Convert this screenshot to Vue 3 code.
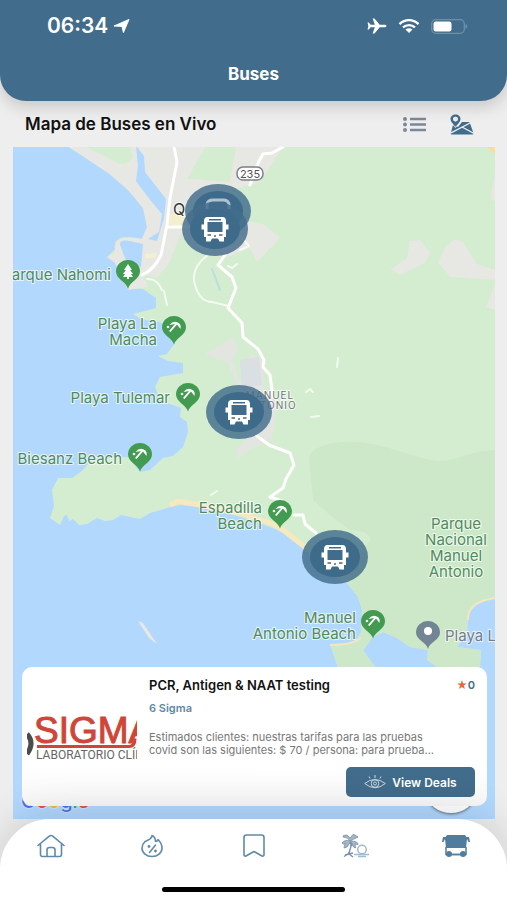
<script setup>
const buses = [
  { id: 1, x: 218, y: 211, faded: true },
  { id: 2, x: 215, y: 229 },
  { id: 3, x: 239, y: 412 },
  { id: 4, x: 335, y: 557 },
]

const beaches = [
  { x: 174, y: 345 },
  { x: 188, y: 412 },
  { x: 140, y: 472 },
  { x: 280, y: 529 },
  { x: 373, y: 639 },
]

const labels = [
  { x: 111, y: 280, text: 'Parque Nahomi', anchor: 'end' },
  { x: 157, y: 329, text: 'Playa La', anchor: 'end' },
  { x: 157, y: 345, text: 'Macha', anchor: 'end' },
  { x: 170, y: 403, text: 'Playa Tulemar', anchor: 'end' },
  { x: 122, y: 464, text: 'Biesanz Beach', anchor: 'end' },
  { x: 262, y: 513, text: 'Espadilla', anchor: 'end' },
  { x: 262, y: 529, text: 'Beach', anchor: 'end' },
  { x: 356, y: 623, text: 'Manuel', anchor: 'end' },
  { x: 356, y: 639, text: 'Antonio Beach', anchor: 'end' },
  { x: 456, y: 529, text: 'Parque', anchor: 'middle' },
  { x: 456, y: 545, text: 'Nacional', anchor: 'middle' },
  { x: 456, y: 561, text: 'Manuel', anchor: 'middle' },
  { x: 456, y: 577, text: 'Antonio', anchor: 'middle' },
]
</script>

<template>
  <div class="screen">
    <header class="header">
      <div class="status">
        <div class="status-group">
          <span class="time">06:34</span>
          <svg class="locate" viewBox="0 0 17 14" aria-hidden="true"><path d="M16 0 10 14 8.500 7.500 0 7z" fill="#fff" stroke="#fff" stroke-linejoin="round" /></svg>
        </div>
        <div class="status-group signals">
          <svg class="plane" viewBox="0 0 20 16" aria-hidden="true"><path d="M19.500 8c0-.9-1-1.300-2.200-1.300h-4.600L7.500.500H5.600l2.300 6.200H3.600L1.800 4.500H.500L1.400 8 .5 11.500h1.300l1.800-2.200h4.300l-2.300 6.200h1.900l5.200-6.200h4.600c1.200 0 2.200-.4 2.200-1.300z" fill="#fff" /></svg>
          <svg class="wifi" viewBox="0 0 22 14" aria-hidden="true">
            <path d="M1.500 5.200C7-.2 15-.2 20.500 5.200M5 8.400c3.500-3.100 8.500-3.100 12 0" fill="none" stroke="#fff" stroke-width="2.400" />
            <path d="M7.500 10.600c2-1.700 5-1.700 7 0L11 14z" fill="#fff" />
          </svg>
          <svg class="battery" viewBox="0 0 37 15" aria-hidden="true">
            <rect x=".7" y=".7" width="32.600" height="13.600" rx="4" fill="none" stroke="#6d8fa9" stroke-width="1.300" />
            <rect x="2.500" y="2.500" width="18" height="10" rx="2.200" fill="#fff" />
            <path d="M34.500 5v5q2-.8 2-2.500t-2-2.500" fill="#6d8fa9" />
          </svg>
        </div>
      </div>
      <h1 class="title">Buses</h1>
    </header>

    <main class="main">
      <div class="toolbar">
        <h2 class="heading">Mapa de Buses en Vivo</h2>
        <div class="views">
          <button type="button" class="view-button" aria-label="Lista">
            <svg class="list-icon" viewBox="0 0 23 15">
              <g fill="#7e8797"><circle cx="2" cy="2" r="2" /><circle cx="2" cy="7.500" r="2" /><circle cx="2" cy="13" r="2" /><path d="M7 .8h16v2.400H7zM7 6.300h16v2.400H7zM7 11.800h16v2.400H7z" /></g>
            </svg>
          </button>
          <button type="button" class="view-button" aria-label="Mapa">
            <svg class="map-icon" viewBox="0 0 24 21">
              <path d="M3 11 .8 19.300q-.2 1.200 1 1.200h20.700q1.300 0 1-1.200L20 9.200Q19.700 8 18.500 8H12l-4 5z" fill="#426c8b" />
              <path d="M1 18.800 21 8.500M12 13l12 6.500" stroke="#eee" stroke-width="1.300" />
              <path d="M5.500.5C2.700.5.500 2.400.5 5c0 2.600 2.500 5 5 7.800 2.500-2.800 5-5.200 5-7.800 0-2.600-2.200-4.500-5-4.500zm0 7a2.400 2.400 0 1 1 0-4.800 2.400 2.400 0 0 1 0 4.800z" fill="#426c8b" fill-rule="evenodd" stroke="#eee" stroke-width="1.600" paint-order="stroke" />
              <circle cx="5.500" cy="5.100" r="2.300" fill="#eee" />
            </svg>
          </button>
        </div>
      </div>

      <section class="map" aria-label="Mapa">
        <svg class="map-canvas" viewBox="13 147 482 672" preserveAspectRatio="xMidYMid slice">
          <defs>
            <symbol id="beach-pin" viewBox="0 0 24 29" overflow="visible">
              <path d="M12 28.500C10.500 22 0 19 0 11.500a12 11.500 0 0 1 24 0C24 19 13.500 22 12 28.500z" fill="#429b50" />
              <path d="M7.500 9Q12 3.500 17.500 7.500 19.500 10 18.500 13L15 8.500 8.500 16 7 15l6-7z" fill="#fff" />
              <circle cx="6" cy="11" r="1.300" fill="#fff" />
            </symbol>
            <symbol id="bus-glyph" viewBox="0 0 28 25">
              <path d="M6.500 0h15C24 0 25 2 25 4v3.500h2.500v5H25V20h-2v4.500h-4.500L17 21.500h-6l-1.500 3H5V20H3v-7.500H.5v-5H3V4c0-2 1-4 3.500-4z" fill="#fff" />
              <path d="M8 2h12v1.500H8zM6.500 5h15v10h-15z" fill="#426c8b" />
              <path d="M6.500 18h3.500M18 18h3.500M13 19h2" stroke="#426c8b" stroke-width="1.500" />
            </symbol>
          </defs>

          <path d="M13 147h482v672H13z" fill="#b2d8fe" />
          <path d="M67 146 87 157 110 173 128 190 143 208 147 227 142 239 123 237Q113 240 115 249L107 257 120 262 118 276 128 288 143 289 156 298V308L145 311 133 314 141 319 160 322 176 332 175 343 167 354 158 356 168 361 183 363V373L160 377 155 387 160 400 170 404 181 408 180 417 187 422 188 432 183 447 173 456 163 458 150 470 140 472 128 457 110 458 90 462 82 471 72 478 58 478 52 490 54 506 50 518 60 525 64 516 67 515 69 521 73 519 79 525 87 524 97 518 105 521 113 520 121 515 140 519 150 513 167 508 180 505 200 507 233 515 260 523 277 530 300 543 320 570 347 583 358 597 362 610 361 632 355 643 330 644 338 667H375L363 650 373 637 383 632 397 638 410 647 428 650 427 660 437 667H480L481 650 457 647 467 633 468 613 477 603 495 598V147z" fill="#d4edd0" />
          <path d="M309 458Q310 446 340 442C380 440 405 455 430 460S462 451 495 450V598L477 603 468 613 467 633 457 647 481 650 480 667H437L427 660 428 650 410 647 397 638 383 632 373 637 363 650 375 667H338L330 644 355 643 361 632 362 610 358 597 347 583 360 555 370 540Q370 530 350 530L330 515 313 500z" fill="#cde8c8" />
          <path d="M67 146H258L283 147 260 182 232 190 225 215 265 225 280 238 257 262 250 248 225 258 205 252 180 235 170 262 157 278 142 274 148 287 128 290 115 263 107 257 115 253V244Q122 234 142 239L147 227 143 208 128 190 108 173z" fill="#e7e7e3" />
          <path d="M86 147H130L133 157Q128 165 120 164Q101 154 86 147z" fill="#d4edd0" />
          <path d="M205 147 236 147 230 182 205 180 187 179zM170 262 182 239 200 248 188 275 157 278zM232 190 245 186 258 210 252 222z" fill="#d4edd0" />
          <path d="M136 146 144 156 145 172 166 199 164 218 157 241 148 239 159 232 162 214 151 201 136 181 138 166zM120 245Q119 239 130 241L143 244 141 267 127 263z" fill="#b2d8fe" />
          <path d="M145 254 157 253 156 258 145 258zM168 215 195 208 185 226 170 226z" fill="#f4efcf" />
          <path d="M205 354 232 338 238 347 232 360 240 383 250 353 262 360 264 388 278 400 272 440 245 452 237 460 236 450 248 437 247 410 235 382 228 363z" fill="#e3e5e1" />
          <path d="M240 360 259 357 262 385 242 389z" fill="#dadfe4" />
          <path d="M391 269 407 258 410 241 420 240 430 253 425 263 400 275zM438 262 447 245 455 239 463 242 477 264 495 270V280L450 277zM495 285 486 307 495 310zM495 174 490 199 495 201z" fill="#e7e7e3" />
          <path d="M487 147h8v7z" fill="#f9df92" />
          <path d="M138 621 143 623 157 644 149 638z" fill="#e7e7e3" />
          <path d="M170 505 178 501 195 504 240 513 278 526 306 548" fill="none" stroke="#f8e8bd" stroke-width="5" />
          <path d="M468 620Q467 602 495 598M330 645Q350 646 361 638" fill="none" stroke="#f5e6bd" stroke-width="2" />
          <g fill="none" stroke="#fff" stroke-linejoin="round" stroke-linecap="round">
            <path d="M174 147 177 162 170 198 167 225 161 255Q154 270 142 275M168 227H190M250 185 258 163 263 154 272 153 283 147M225 255 218 265 232 277 236 288 228 308 242 323 243 337 258 349 264 360 263 367 270 375 273 397M257 436 269 445 290 453 294 465 286 479 283 488 270 497 282 501M294 515 303 515 305 524 316 533" stroke-width="3" />
            <path d="M208 255Q190 268 195 285T212 302L229 306M162 290Q157 278 147 279M164 291 167 305M240 236 249 246 240 250M338 358 337 367M306 392l4-3 3 3M311 417l8-1M228 266l4 2 5-4M211 495l6-4" stroke-width="2" opacity=".7" />
            <path d="M212 269 220 290" stroke="#bedce7" stroke-width="2" />
          </g>

          <text class="place city" x="173" y="215">Q</text>
          <text class="place district" x="270" y="399" text-anchor="middle">MANUEL</text>
          <text class="place district" x="270" y="409" text-anchor="middle">ANTONIO</text>
          <rect x="237" y="167" width="26" height="13" rx="6" fill="#fff" stroke="#7c8186" stroke-width="1.500" />
          <text class="place route" x="250" y="178" text-anchor="middle">235</text>
          <text v-for="label in labels" :key="label.text + label.y" class="place" :x="label.x" :y="label.y" :text-anchor="label.anchor">{{ label.text }}</text>
          <text class="place muted" x="445" y="641">Playa La Vaca</text>

          <path d="M128 289C126.500 282 116 279 116 271.500a12 11.500 0 0 1 24 0C140 279 129.500 282 128 289z" fill="#429b50" />
          <path d="m128 264-4 6h2l-3 4h2l-2 3h4v2h2v-2h4l-2-3h2l-3-4h2z" fill="#fff" />
          <use v-for="pin in beaches" :key="pin.y" href="#beach-pin" :x="pin.x - 12" :y="pin.y - 29" width="24" height="29" />
          <path d="M428 649C426.500 642 416 640 416 632.500a12 11.500 0 0 1 24 0C440 640 429.500 642 428 649z" fill="#738594" />
          <circle cx="428" cy="631" r="4" fill="#fff" />

          <a v-for="bus in buses" :key="bus.id" :href="'#bus-' + bus.id" :aria-label="'Bus ' + bus.id">
            <ellipse :cx="bus.x" :cy="bus.y" rx="33" ry="27" fill="#426c8b" fill-opacity=".82" />
            <ellipse :cx="bus.x" :cy="bus.y" rx="25" ry="20" fill="#3f6b8b" />
            <path v-if="bus.faded" d="M207 209v-5q1-4 6-4h10q5 0 6 4v5" fill="none" stroke="#b1c3d1" stroke-width="3" />
            <use v-else href="#bus-glyph" :x="bus.x - 14" :y="bus.y - 12" width="28" height="25" />
          </a>
        </svg>

        <div class="attribution">
          <span class="google" aria-label="Google"><span class="blue">G</span><span class="red">o</span><span class="yellow">o</span><span class="blue">g</span><span class="green">l</span><span class="red">e</span></span>
          <span class="round-control"></span>
        </div>

        <article class="card">
          <svg class="logo" viewBox="0 0 110 50" role="img" aria-label="Sigma Laboratorio Clínico">
            <path d="M0 22q8 9 0 20" fill="none" stroke="#4b4b4b" stroke-width="5" />
            <text class="logo-name" x="7" y="31">SIGMA</text>
            <path d="M10 34.500h92q6 0 6-8" fill="none" stroke="#cf4638" stroke-width="3" />
            <text class="logo-sub" x="9" y="47">LABORATORIO CLÍNICO</text>
          </svg>
          <div class="info">
            <div class="info-top">
              <h3 class="deal-title">PCR, Antigen &amp; NAAT testing</h3>
              <span class="rating"><span class="star">★</span>0</span>
            </div>
            <p class="vendor">6 Sigma</p>
            <p class="description">Estimados clientes: nuestras tarifas para las pruebas<br>covid son las siguientes: $ 70 / persona: para prueba...</p>
            <button type="button" class="deals">
              <svg class="eye" viewBox="0 0 22 14" aria-hidden="true">
                <g fill="none" stroke="#c9d8e3"><path d="M.7 8.500Q11 .5 21.300 8.500 11 17 .7 8.500z" /><circle cx="11" cy="8.500" r="3.800" /><circle cx="11" cy="8.500" r="1.500" /><path d="M11 0v3M5 1.500l1 2M17 1.500l-1 2" /></g>
              </svg>
              View Deals
            </button>
          </div>
        </article>
      </section>
    </main>

    <nav class="nav" aria-label="Principal">
      <div class="tabs">
        <a href="#inicio" class="tab" aria-label="Inicio">
          <svg viewBox="0 0 28 24"><g fill="none" stroke="#5f8aaa" stroke-width="1.600" stroke-linecap="round" stroke-linejoin="round"><path d="M1 11.500 12 2.300q2-1.500 4 0L27 11.500M3.500 10v10.500q0 2 2 2h17q2 0 2-2V10M10 22v-6q0-2.500 2.500-2.500h3Q18 13.500 18 16v6" /></g></svg>
        </a>
        <a href="#ofertas" class="tab" aria-label="Ofertas">
          <svg viewBox="0 0 28 24"><g fill="none" stroke="#5f8aaa" stroke-width="1.600" stroke-linecap="round" stroke-linejoin="round"><path d="M14 1.500C14 5.500 8 7 7 7.500 5 9.500 4 11.500 4 14c0 5 4.500 8.500 10 8.500S24 19 24 14c0-3.500-1.500-6-4-8.500-.5 1.500-1.500 2-2.500 2 0-3-1-5-3.500-6zM17.500 11l-6 7.500" /></g><circle cx="11" cy="12.500" r="1.400" fill="#5f8aaa" /><circle cx="17.500" cy="17" r="1.400" fill="#5f8aaa" /></svg>
        </a>
        <a href="#guardados" class="tab" aria-label="Guardados">
          <svg viewBox="0 0 28 24"><path d="M4 20.500V3.500Q4 1 6.500 1h15Q24 1 24 3.500v17q0 2-2 1.500L14 17.500 6 22q-2 .5-2-1.500z" fill="none" stroke="#5f8aaa" stroke-width="1.600" stroke-linejoin="round" /></svg>
        </a>
        <a href="#playas" class="tab" aria-label="Playas">
          <svg viewBox="0 0 28 24">
            <path d="M9.500 7C7 6 3 6 1 9q1.500 1.500 3 .5L3 14l3-1 3.500-5 3 5 2 1-.5-4 3 .5Q17 7 9.500 7zM9 7Q7 3 2 3l.5-1.500L6 1l3 3 3-3.500L14 1l3 2-2 1q-3 1-5.500 3z" fill="#a4b5c3" stroke="#7891a6" stroke-width=".8" />
            <path d="M9.500 8Q11 14 7 20l-4 2.500M11 9q-2 6-3 11l4 3M4 21l8-2" fill="none" stroke="#7992a7" stroke-width="1.300" />
            <circle cx="21" cy="15.500" r="4.300" fill="none" stroke="#9ebbd0" stroke-width="1.500" />
            <path d="M13 20.500h15M17 22.500h8" stroke="#9ebbd0" stroke-width="1.500" />
          </svg>
        </a>
        <a href="#buses" class="tab" aria-label="Buses" aria-current="page">
          <svg viewBox="0 0 28 24"><path d="M5 1h18l1.500 2H27l1 5h-1.500L25 5l-1 9H4L3 5 1.500 8H0l1-5h2.500z" fill="#527c9d" /><path d="M4 13v7.500h20V13" fill="none" stroke="#527c9d" stroke-width="1.500" /><path d="M9 20.500h10" stroke="#527c9d" stroke-width="1.500" /><circle cx="7" cy="20" r="3" fill="#527c9d" /><circle cx="21" cy="20" r="3" fill="#527c9d" /></svg>
        </a>
      </div>
      <div class="home-indicator"></div>
    </nav>
  </div>
</template>

<style>
body {
  margin: 0;
}
</style>

<style scoped>
.screen {
  display: flex;
  flex-direction: column;
  min-height: 100vh;
  background: #eee;
  color: #111;
  font-family: Inter, "Liberation Sans", sans-serif;
}

h1, h2, h3, p {
  margin: 0;
}

svg {
  display: block;
}

button {
  padding: 0;
  border: 0;
  background: none;
  font: inherit;
  cursor: pointer;
}

.header {
  position: relative;
  z-index: 1;
  box-sizing: border-box;
  height: 101px;
  padding: 14px 39px 0 47px;
  border-radius: 0 0 26px 26px;
  background: #426c8b;
  box-shadow: 0 6px 16px rgb(0 0 0 / 16%);
  color: #fff;
}

.status,
.status-group {
  display: flex;
  align-items: center;
}

.status {
  justify-content: space-between;
  height: 24px;
}

.status-group {
  gap: 6px;
}

.signals {
  gap: 11px;
}

.time {
  font-size: 21px;
  font-weight: 600;
  line-height: 24px;
}

.locate { width: 16px; height: 14px; }
.plane { width: 20px; height: 16px; }
.wifi { width: 22px; height: 14px; }
.battery { width: 37px; height: 15px; }

.title {
  margin: 26px 8px 0 0;
  font-size: 17px;
  font-weight: 700;
  line-height: 20px;
  text-align: center;
}

.main {
  display: flex;
  flex: 1;
  flex-direction: column;
  padding: 0 12px 0 13px;
}

.toolbar {
  display: flex;
  align-items: center;
  justify-content: space-between;
  height: 46px;
  padding: 0 21px 0 12px;
}

.heading {
  font-size: 17px;
  font-weight: 600;
  line-height: 20px;
}

.views {
  display: flex;
  align-items: center;
  gap: 24px;
}

.list-icon { width: 23px; height: 15px; }
.map-icon { width: 24px; height: 21px; }

.map {
  position: relative;
  display: flex;
  flex: 1;
  min-height: 480px;
  overflow: hidden;
}

.map-canvas {
  position: absolute;
  width: 100%;
  height: 100%;
}

.place {
  fill: #4e8b5b;
  stroke: #fff;
  stroke-width: 2px;
  stroke-opacity: 0.7;
  paint-order: stroke;
  font-family: Inter, "Liberation Sans", sans-serif;
  font-size: 15px;
}

.city { fill: #333; font-size: 16px; }
.district { fill: #6d7478; font-size: 10px; letter-spacing: 1px; }
.route { fill: #555; font-size: 11px; }
.muted { fill: #717d8b; }

.attribution {
  position: absolute;
  right: 20px;
  bottom: 6px;
  left: 8px;
  display: flex;
  align-items: flex-end;
  justify-content: space-between;
}

.google {
  font-size: 20px;
  font-weight: 500;
  line-height: 24px;
  text-shadow: 0 0 2px #fff;
}

.blue { color: #4c73e6; }
.red { color: #dd5347; }
.yellow { color: #edba3c; }
.green { color: #45a060; }

.round-control {
  width: 48px;
  height: 40px;
  border-radius: 50%;
  background: #fff;
  box-shadow: 0 1px 3px rgb(0 0 0 / 50%);
}

.card {
  position: absolute;
  right: 8px;
  bottom: 13px;
  left: 9px;
  display: flex;
  gap: 12px;
  box-sizing: border-box;
  padding: 10px 12px 9px 5px;
  border-radius: 10px;
  background: linear-gradient(#fff 70%, #f8f8f9);
}

.logo {
  flex: none;
  align-self: center;
  width: 110px;
  height: 50px;
}

.logo-name {
  fill: #cf4638;
  stroke: #cf4638;
  stroke-width: 1px;
  font-family: "Liberation Sans", sans-serif;
  font-size: 37px;
}

.logo-sub {
  fill: #666;
  font-family: Roboto, sans-serif;
  font-size: 12px;
}

.info {
  display: flex;
  flex: 1;
  flex-direction: column;
  min-width: 0;
}

.info-top {
  display: flex;
  align-items: center;
  justify-content: space-between;
}

.deal-title {
  font-size: 13px;
  font-weight: 600;
  line-height: 16px;
}

.rating {
  color: #426c8b;
  font-size: 11px;
  font-weight: 600;
  line-height: 16px;
}

.star {
  color: #df6b35;
}

.vendor {
  margin-top: 8px;
  color: #5e89a8;
  font-size: 11px;
  font-weight: 600;
  line-height: 14px;
}

.description {
  margin-top: 16px;
  color: #777;
  font-size: 11px;
  line-height: 13px;
  white-space: nowrap;
}

.deals {
  display: flex;
  align-items: center;
  align-self: flex-end;
  justify-content: center;
  gap: 6px;
  width: 129px;
  height: 30px;
  margin-top: 10px;
  border-radius: 5px;
  background: #426c8b;
  color: #fff;
  font-size: 12px;
  font-weight: 600;
}

.eye { width: 22px; height: 14px; }

.nav {
  position: relative;
  z-index: 1;
  box-sizing: border-box;
  height: 81px;
  padding: 15px 0 8px;
  border-radius: 50px 50px 0 0;
  background: #fff;
  box-shadow: 0 -6px 40px rgb(0 0 0 / 14%);
}

.tabs {
  display: flex;
}

.tab {
  display: flex;
  flex: 1;
  justify-content: center;
}

.tab svg {
  width: 28px;
  height: 24px;
}

.home-indicator {
  width: 36%;
  height: 5px;
  margin: 29px auto 0;
  border-radius: 3px;
  background: #000;
}
</style>
